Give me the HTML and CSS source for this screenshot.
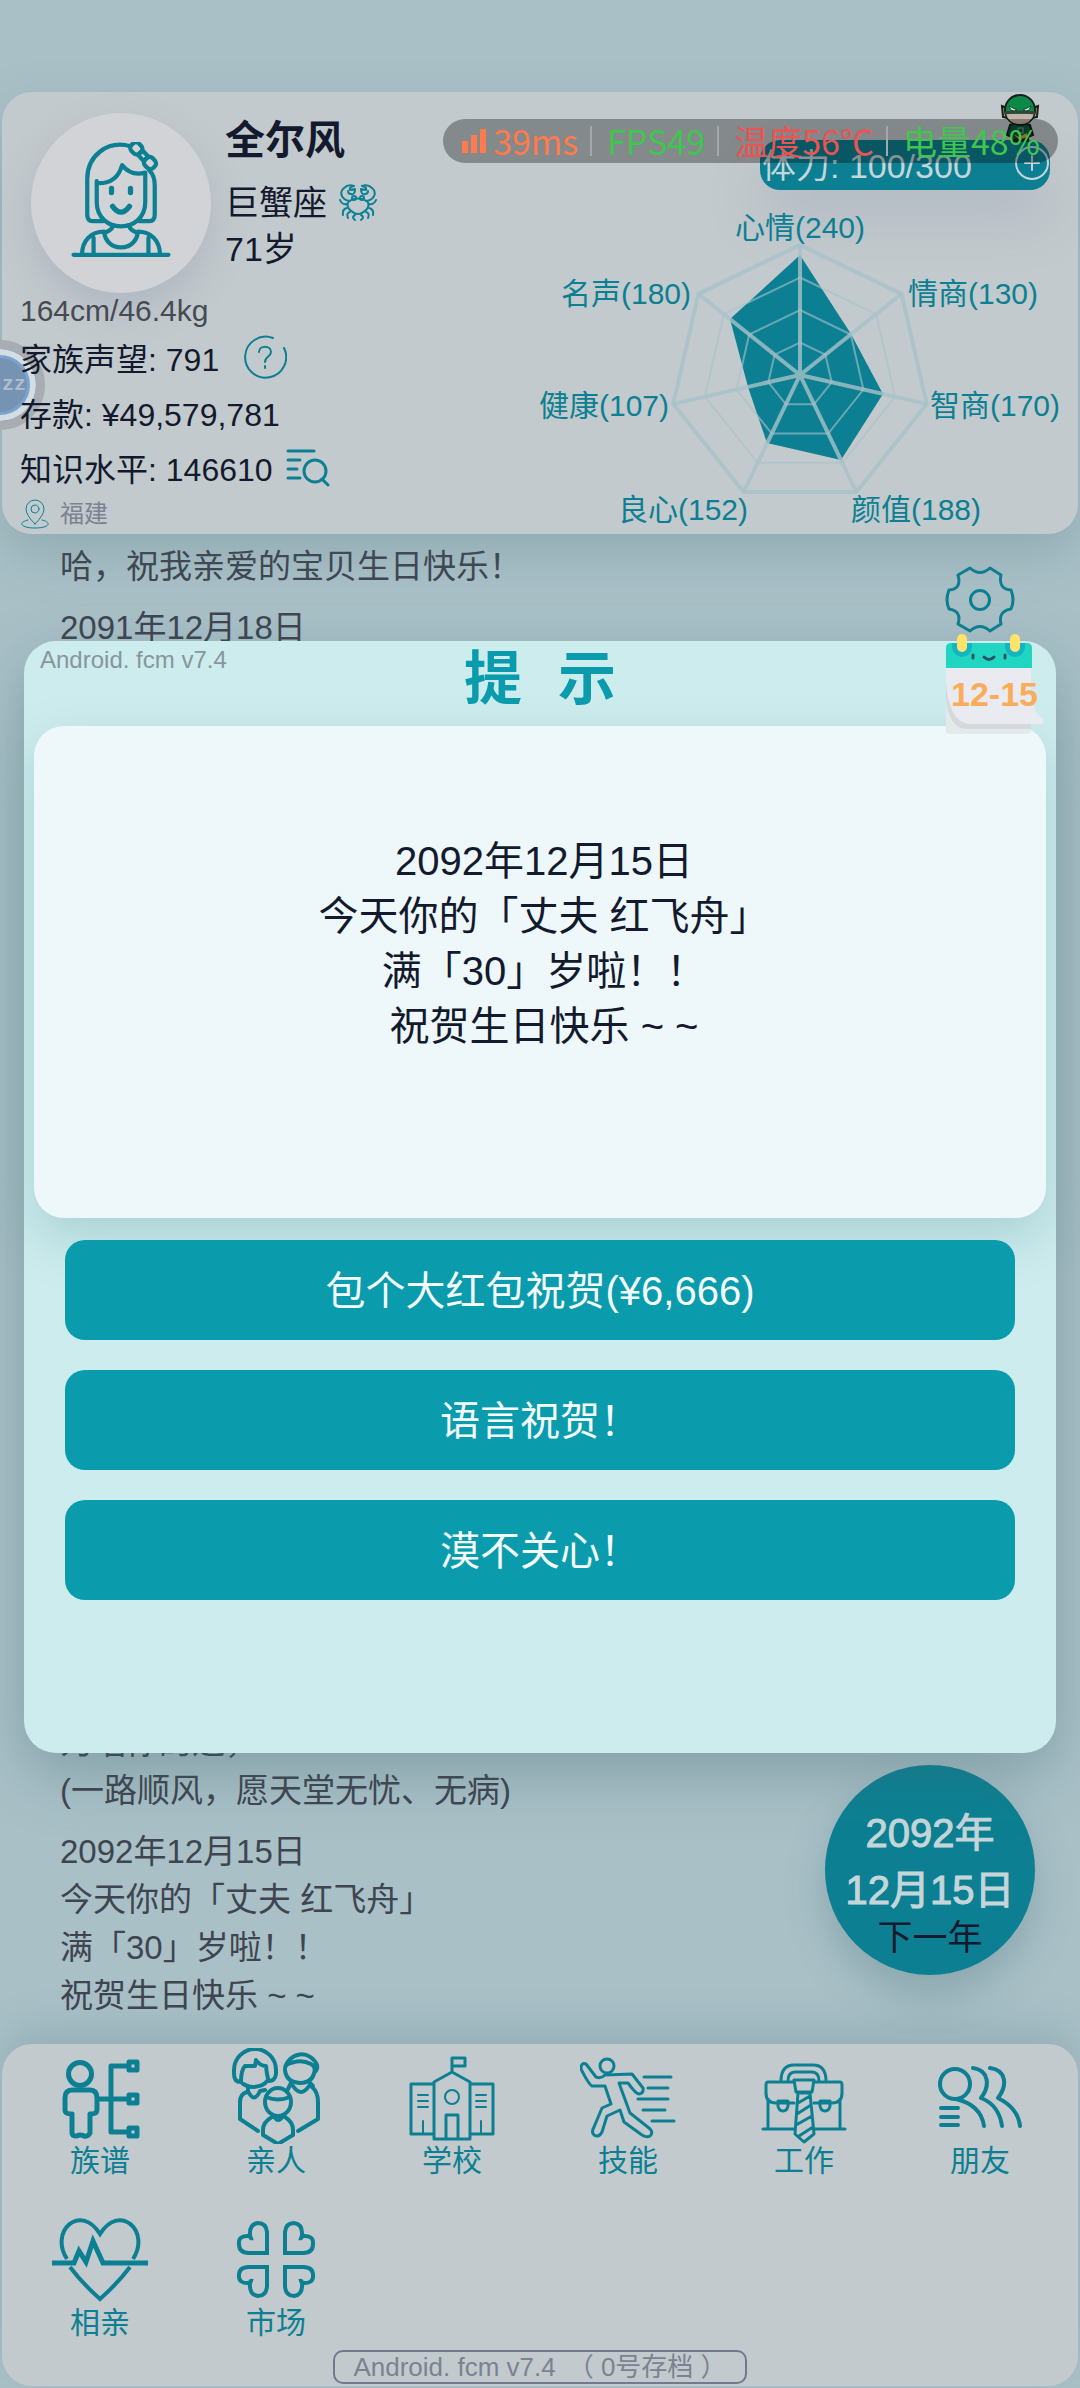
FILE: index.html
```html
<!DOCTYPE html>
<html lang="zh-CN">
<head>
<meta charset="utf-8">
<meta name="viewport" content="width=device-width, initial-scale=1">
<title>人生模拟</title>
<link rel="stylesheet" href="styles.css">
</head>
<body>
<div class="screen">
  <header class="profile">
    <div class="float-ball">zz</div>
    <section class="bio">
      <div class="identity">
        <div class="avatar">
          <svg class="line" width="102" height="116" viewBox="0 1 96 110" stroke-width="4">
            <path d="M57 5C35 -1 16 14 16 36V70Q16 76 21 76H31M75 28Q80 33 80 42V70Q80 76 75 76H65"/>
            <path d="M25 38V58C25 73 36 81 48 81S71 73 71 58V30Q58 34 49 23Q44 41 25 40"/>
            <path d="M39 45V49M57 45V49" stroke-width="5"/>
            <path d="M40 62Q48 73 56 62" stroke-width="5"/>
            <g transform="translate(69 14) rotate(47)"><rect x="-15" y="-5" width="11" height="10" rx="4"/><rect x="-4" y="-3" width="8" height="6"/><rect x="4" y="-5" width="11" height="10" rx="4"/></g>
            <path d="M41 80Q38 86 32 87C33 94 38 101 48 101S63 94 64 87Q58 86 55 80"/>
            <path d="M32 86C20 86 11 94 11 108M64 86C76 86 85 94 85 108M22 92V108M74 92V108M3 108H93"/>
          </svg>
        </div>
        <div class="who">
          <h1 class="name">全尔风</h1>
          <p class="fact">巨蟹座
            <svg class="line" width="40" height="38" viewBox="0 0 40 38" stroke-width="2">
              <path d="M11 17Q20 12 29 17Q32 21 29 25Q24 30 20 30T11 25Q8 21 11 17Z"/>
              <circle cx="16" cy="14" r="2"/><circle cx="24" cy="14" r="2"/>
              <path d="M12 17C3 16 1 8 6 4Q10 0 16 2Q11 3 12 6L17 5Q17 11 13 10Q10 10 10 7M28 17C37 16 39 8 34 4Q30 0 24 2Q29 3 28 6L23 5Q23 11 27 10Q30 10 30 7M9 20Q4 21 2 16M31 20Q36 21 38 16M9 24Q4 25 5 31M31 24Q36 25 35 31M12 28Q8 29 10 34M28 28Q32 29 30 34M17 31Q13 33 17 36M23 31Q27 33 23 36"/>
            </svg>
          </p>
          <p class="fact">71岁</p>
        </div>
      </div>
      <p class="build">164cm/46.4kg</p>
      <p class="stat"><span>家族声望: 791</span>
        <button class="icon-btn help" aria-label="声望说明">
          <svg class="line" width="44" height="44" viewBox="0 0 44 44" stroke-width="2"><path d="M30 3A20.5 20.5 0 1 0 41 13M16 17C16 10 28 10 28 17C28 22 22 21 22 27M22 31V33"/></svg>
        </button>
      </p>
      <p class="stat"><span>存款: ¥49,579,781</span></p>
      <p class="stat"><span>知识水平: 146610</span>
        <button class="icon-btn detail" aria-label="知识明细">
          <svg class="line" width="46" height="40" viewBox="0 0 46 40" stroke-width="3"><path d="M3 4H29M3 13H15M3 22H12M3 31H15M37 32L43 38"/><circle cx="30" cy="24" r="11"/></svg>
        </button>
      </p>
      <p class="place">
        <svg class="line" width="30" height="30" viewBox="0 0 30 30" stroke-width="1"><path d="M15 25Q6 16 6 10A9 9 0 0 1 24 10Q24 16 15 25ZM8 21C-2 23 0 29 15 29S32 23 22 21"/><circle cx="15" cy="10" r="4"/></svg>
        <span>福建</span>
      </p>
    </section>
    <section class="abilities">
      <div class="energy"><span>体力: 100/300</span>
        <button class="icon-btn" aria-label="增加体力">
          <svg class="line pale" width="34" height="34" viewBox="0 0 34 34" stroke-width="2"><circle cx="17" cy="17" r="16"/><path d="M17 10V24M10 17H24"/></svg>
        </button>
      </div>
      <svg class="radar" viewBox="530 200 540 330" role="img" aria-label="能力雷达图">
        <polygon class="area" points="800,255 851,334 883,394 841,460 767,443 748,387 730,319"/>
        <g class="rings">
          <polygon points="800,342.5 825.4,354.7 831.7,382.2 814.1,404.3 785.9,404.3 768.3,382.2 774.6,354.7"/>
          <polygon points="800,310 850.8,334.5 863.4,389.5 828.2,433.6 771.8,433.6 736.6,389.5 749.2,334.5"/>
          <polygon points="800,277.5 876.2,314.2 895.1,396.7 842.3,462.8 757.7,462.8 704.9,396.7 723.8,314.2"/>
        </g>
        <g class="spokes">
          <polygon points="800,245 901.6,293.9 926.7,403.9 856.4,492.1 743.6,492.1 673.3,403.9 698.4,293.9"/>
          <path d="M800 375V245M800 375L901.6 293.9M800 375L926.7 403.9M800 375L856.4 492.1M800 375L743.6 492.1M800 375L673.3 403.9M800 375L698.4 293.9"/>
        </g>
        <g class="axis">
          <text x="800" y="238" text-anchor="middle">心情(240)</text>
          <text x="908" y="304">情商(130)</text>
          <text x="930" y="416">智商(170)</text>
          <text x="851" y="520">颜值(188)</text>
          <text x="748" y="520" text-anchor="end">良心(152)</text>
          <text x="669" y="416" text-anchor="end">健康(107)</text>
          <text x="691" y="304" text-anchor="end">名声(180)</text>
        </g>
      </svg>
    </section>
  </header>

  <main class="story">
    <div class="log">
      <div class="entry"><p>哈，祝我亲爱的宝贝生日快乐！</p></div>
      <div class="entry"><p>2091年12月18日</p></div>
      <div class="entry latest"><p>为唱你的过，</p><p>(一路顺风，愿天堂无忧、无病)</p></div>
      <div class="entry"><p>2092年12月15日</p><p>今天你的「丈夫 红飞舟」</p><p>满「30」岁啦！！</p><p>祝贺生日快乐 ~ ~</p></div>
    </div>
    <div class="side">
      <button class="icon-btn gear" aria-label="设置">
        <svg class="line" width="70" height="68" viewBox="0 0 70 68" stroke-width="3"><path d="M25 2Q35 11 45 2L56 9Q53 23 66 24Q70 34 66 43Q53 45 56 58L45 65Q35 56 25 65L13 58Q17 45 4 43Q0 34 4 24Q17 23 13 9Z"/><circle cx="35" cy="34" r="9.500"/></svg>
      </button>
      <button class="next"><strong>2092年</strong><strong>12月15日</strong><span>下一年</span></button>
    </div>
  </main>

  <nav class="dock">
    <ul class="menu">
      <li><a href="#tree"><svg class="line" width="96" height="96" viewBox="0 0 96 96" stroke-width="5"><circle cx="28" cy="26" r="11.500"/><path d="M20 42H38Q45 42 45 50V62Q45 66 38 66V85Q36 89 32 88Q28 86 25 88Q20 88 20 85V66Q13 66 13 62V50Q13 42 20 42Z"/><path d="M47 51H76M76 18H59V84H76"/><rect x="77" y="14" width="8" height="8"/><rect x="77" y="47" width="8" height="8"/><rect x="77" y="80" width="8" height="8"/></svg>族谱</a></li>
      <li><a href="#family"><svg class="line" width="96" height="96" viewBox="0 0 96 96" stroke-width="4"><path d="M13 34Q6 34 6 26V22A21 21 0 0 1 48 22V26Q47 33 41 33Q39 29 38 18Q32 18 28 12L27 18H17Q13 22 13 34Q18 39 26 39Q36 38 39 33"/><path d="M20 39V43Q26 56 32 43L37 42M19 44Q12 46 12 54V71L30 83"/><path d="M57 20A17 18 0 0 1 89 17Q90 21 87 24Q87 18 83 16Q72 10 58 17ZM57 22Q58 34 72 35Q86 35 87 20M63 35L60 41M82 35L85 38M65 38Q73 50 81 38M84 39Q90 44 90 54V71L70 83"/><ellipse cx="50" cy="54" rx="13" ry="14"/><path d="M38 49Q50 54 62 49M46 68Q50 76 55 68M44 69Q35 74 35 82V87L50 96L65 87V82Q65 74 57 69"/></svg>亲人</a></li>
      <li><a href="#school"><svg class="line" width="96" height="96" viewBox="0 0 96 96" stroke-width="3"><path d="M30 86H7V36H30M66 36H89V86H66M30 91V34L48 24L66 34V91ZM48 24V10H61V18H48M42 90V67H54V90"/><circle cx="48" cy="49" r="7" stroke-width="2"/><path stroke-width="2" d="M14 47H24M14 53H24M14 59H24M72 47H82M72 53H82M72 59H82M19 73V85M77 73V85"/></svg>学校</a></li>
      <li><a href="#skill"><svg class="line" width="96" height="96" viewBox="0 0 96 96" stroke-width="3"><circle cx="27" cy="18" r="7"/><path d="M25 27L52 26L63 40Q64 45 59 46Q56 46 48 35H39L50 65L69 80Q74 84 70 88Q67 90 62 87L44 74L40 62L27 68L22 84Q19 90 14 87Q11 84 14 79L22 60L31 56L25 38H12Q9 37 1 21Q1 14 6 16L16 29Q21 31 25 27M64 29H91M68 40H88M58 51H88M63 62H85M72 73H94"/></svg>技能</a></li>
      <li><a href="#job"><svg class="line" width="96" height="96" viewBox="0 0 96 96" stroke-width="3"><path d="M25 33Q25 17 38 17H57Q70 17 70 33M32 33Q32 24 39 24H56Q63 24 63 33M38 34H12Q10 34 10 37V45Q10 55 20 55H38M58 34H84Q86 34 86 37V45Q86 55 76 55H58M12 51V81M84 51V81M7 81H38M58 81H89"/><path d="M22 53H32V58Q31 63 27 63T22 58ZM64 53H74V58Q73 63 69 63T64 58ZM38 32H58L56 44H40ZM42 45H54L58 86L48 94L39 86ZM54 48L42 55M55 57L41 66M56 68L40 77M57 79L43 88"/></svg>工作</a></li>
      <li><a href="#friend"><svg class="line" width="96" height="96" viewBox="0 0 96 96" stroke-width="4"><circle cx="23" cy="36" r="15"/><path d="M24 51Q49 57 52 78M41 20C56 22 59 37 49 50Q67 57 70 78M58 20C74 22 76 37 66 50Q86 60 88 78M9 60H26M9 69H26M9 77H26"/></svg>朋友</a></li>
      <li><a href="#date"><svg class="line butt" width="96" height="96" viewBox="0 0 96 96" stroke-width="4"><path d="M15 49C-3 22 28 -8 48 24C68 -8 99 22 81 49M18 57Q30 73 48 89Q66 73 78 57"/><path d="M0 53H22L27 41L34 52L41 31L51 53H96" stroke-width="5"/></svg>相亲</a></li>
      <li><a href="#market"><svg class="line butt" width="96" height="96" viewBox="0 0 96 96" stroke-width="4"><path d="M39 43V22Q38 13 30 13Q21 14 22 26Q10 25 11 34Q11 43 21 43ZM22 26Q22 29 25 28"/><path d="M57 43V22Q58 13 66 13Q75 14 74 26Q86 25 85 34Q85 43 75 43ZM74 26Q74 29 71 28M39 57V77Q38 86 30 86Q21 85 22 73Q10 74 11 65Q11 57 21 57ZM22 73Q22 70 25 71M57 57V77Q58 86 66 86Q75 85 74 73Q86 74 85 65Q85 57 75 57ZM74 73Q74 70 71 71"/></svg>市场</a></li>
    </ul>
    <button class="save"><span>Android. fcm v7.4</span><span>（ 0号存档 ）</span></button>
  </nav>

  <div class="hero">
    <svg width="40" height="50" viewBox="0 0 40 50">
      <path d="M10 32Q20 28 30 32L33 42L28 44V48H12V44L7 42Z" fill="#08573a" stroke="#14201c" stroke-width="2"/>
      <path d="M13 41L19 44L27 40V44L20 47Z" fill="#d6a52d"/><path d="M14 47H18M22 47H26" stroke="#211b1b" stroke-width="3"/>
      <rect x="18" y="35" width="5" height="5" fill="none" stroke="#79a594"/>
      <path d="M2 13L7 15V25L3 24ZM38 13L33 15V25L37 24Z" fill="#c7a755" stroke="#14201c" stroke-width="2"/>
      <ellipse cx="20" cy="17" rx="15" ry="15" fill="#0a8949" stroke="#14201c" stroke-width="2"/>
      <path d="M6 21H34Q31 31 20 31T6 21Z" fill="#c5b4a8"/><path d="M5 20Q20 18 35 20" fill="none" stroke="#34443b" stroke-width="3"/>
      <path d="M9 13L17 17Q11 20 9 13ZM31 13L23 17Q29 20 31 13Z" fill="#e3e8e3" stroke="#0a4c2e"/>
    </svg>
  </div>

  <aside class="monitor">
    <span class="net"><svg width="26" height="26" viewBox="0 0 26 26"><path d="M1 13H7V25H1ZM10 7H16V25H10ZM19 1H25V25H19Z"/></svg>39ms</span>
    <span class="good">FPS49</span>
    <span class="hot">温度56℃</span>
    <span class="good">电量48%</span>
  </aside>

  <section class="dialog" role="dialog" aria-labelledby="dialog-title">
    <header class="dialog-head">
      <span class="version">Android. fcm v7.4</span>
      <h2 id="dialog-title" class="title"><span>提</span><span>示</span></h2>
    </header>
    <div class="message">
      <p>2092年12月15日</p>
      <p>今天你的「丈夫 红飞舟」</p>
      <p>满「30」岁啦！！</p>
      <p>祝贺生日快乐 ~ ~</p>
    </div>
    <div class="choices">
      <button class="choice">包个大红包祝贺(¥6,666)</button>
      <button class="choice">语言祝贺！</button>
      <button class="choice">漠不关心！</button>
    </div>
    <div class="calendar">
      <svg width="100" height="100" viewBox="0 0 100 100">
        <path d="M1 50H86V96Q86 100 82 100H4Q1 100 1 96Z" fill="#e4e9ea"/>
        <path d="M1 62Q3 95 22 95H86V50H1Z" fill="#d5d9dc"/>
        <path d="M1 34H86V66Q90 80 98 85Q100 90 94 90H24Q4 88 1 48Z" fill="#e9ebf1"/>
        <path d="M1 34V14Q1 9 6 9H82Q87 9 87 14V34Z" fill="#21d6c1"/>
        <path d="M7 9H27V13A10 10 0 0 1 7 13ZM60 9H80V13A10 10 0 0 1 60 13Z" fill="#13b5c4"/>
        <path d="M17 5V13M70 5V13" stroke="#ffe36a" stroke-width="10" stroke-linecap="round"/>
        <path d="M28 21V24M60 21V24M39 23Q44 28 49 23" stroke="#25565f" stroke-width="3" fill="none" stroke-linecap="round"/>
      </svg>
      <time class="day">12-15</time>
    </div>
  </section>
</div>
</body>
</html>
```
FILE: styles.css
```css
* { box-sizing: border-box; margin: 0; padding: 0; }

:root {
  --teal: #0c8092;
  --ink: #131a2e;
  --panel: #c3cacd;
  --muted: #7c8290;
}

body {
  font-family: "Liberation Sans", "Noto Sans CJK SC", sans-serif;
  background: #a9c0c7;
  color: var(--ink);
}

button { font: inherit; color: inherit; border: 0; background: none; cursor: pointer; }
a { color: inherit; text-decoration: none; }
ul { list-style: none; }

.screen {
  position: relative;
  display: flex;
  flex-direction: column;
  min-height: 100vh;
  padding: 92px 2px 2px;
  overflow: hidden;
}

.line {
  display: block;
  fill: none;
  stroke: var(--teal);
  stroke-linecap: round;
  stroke-linejoin: round;
}
.line.pale { stroke: #c4d6da; }
.line.butt { stroke-linecap: butt; stroke-linejoin: miter; }
.icon-btn { display: block; }

/* profile card */
.profile {
  position: relative;
  isolation: isolate;
  display: flex;
  justify-content: space-between;
  padding-left: 18px;
  border-radius: 30px;
  background: var(--panel);
  box-shadow: 0 20px 50px rgba(70, 110, 115, 0.25);
}
.bio { padding-top: 21px; }
.identity { display: flex; gap: 14px; padding-left: 11px; }
.avatar {
  display: grid;
  place-items: center;
  width: 180px;
  height: 180px;
  padding-bottom: 6px;
  border-radius: 50%;
  background: #d2d3d7;
  box-shadow: 0 16px 36px rgba(130, 140, 170, 0.3);
}
.name { font-size: 40px; line-height: 54px; margin-bottom: 13px; }
.fact { display: flex; align-items: center; gap: 11px; font-size: 34px; line-height: 46px; }
.build { font-size: 30px; line-height: 36px; color: #464a53; }
.stat { display: flex; align-items: center; height: 55px; font-size: 32px; }
.help { margin-left: 24px; }
.detail { margin-left: 12px; }
.place { display: flex; align-items: center; gap: 10px; font-size: 24px; line-height: 40px; color: var(--muted); }

.abilities { display: flex; flex-direction: column; align-items: flex-end; padding: 48px 8px 0 0; }
.energy {
  display: flex;
  align-items: center;
  justify-content: space-between;
  width: 290px;
  height: 50px;
  margin: 0 20px 10px 0;
  padding: 0 1px 4px 2px;
  border-radius: 20px;
  background: var(--teal);
  color: #c4d6da;
  font-size: 34px;
  box-shadow: 0 30px 50px rgba(130, 140, 170, 0.25);
}
.radar { width: 540px; max-width: 100%; }
.radar .area { fill: var(--teal); }
.radar .rings { fill: none; stroke: #a8c1c9; stroke-width: 2; stroke-opacity: 0.6; }
.radar .spokes { fill: none; stroke: #a8c1c9; stroke-width: 4; stroke-opacity: 0.8; }
.radar .axis { fill: var(--teal); font-size: 30px; }

/* half-hidden helper ball on the screen edge */
.float-ball {
  position: absolute;
  z-index: -1;
  left: -47px;
  top: 248px;
  width: 90px;
  height: 90px;
  padding-right: 10px;
  border: 9px solid #a7adb0;
  border-radius: 50%;
  background: #7793b3;
  box-shadow: inset 0 0 0 6px #d3dde4, inset 0 0 0 9px #7ba3d0;
  color: #aebdcb;
  font: bold 20px/72px "Liberation Mono", monospace;
  text-align: right;
}

/* story log */
.story { flex: 1; display: flex; justify-content: space-between; }
.log {
  display: flex;
  flex-direction: column;
  gap: 13px;
  padding: 9px 0 24px 58px;
  color: #3f4550;
  font-size: 33px;
  line-height: 48px;
}
.latest { margin-top: auto; }
.side {
  display: flex;
  flex-direction: column;
  justify-content: space-between;
  align-items: flex-end;
  padding: 32px 43px 69px 0;
}
.gear { margin-right: 20px; }
.next {
  display: flex;
  flex-direction: column;
  align-items: center;
  width: 210px;
  height: 210px;
  padding-top: 40px;
  border-radius: 50%;
  background: var(--teal);
  box-shadow: 0 20px 40px rgba(70, 110, 115, 0.3);
}
.next strong { font-size: 40px; font-weight: 400; line-height: 57px; color: #c4d6da; -webkit-text-stroke: 1px currentColor; }
.next span { font-size: 35px; line-height: 38px; }

/* bottom navigation */
.dock {
  display: flex;
  flex-direction: column;
  align-items: center;
  padding: 4px 10px 2px;
  border-radius: 30px;
  background: var(--panel);
  box-shadow: 0 -16px 40px rgba(70, 110, 115, 0.2);
}
.menu { display: grid; grid-template-columns: repeat(6, 1fr); width: 100%; }
.menu a {
  display: flex;
  flex-direction: column;
  align-items: center;
  height: 162px;
  color: var(--teal);
  font-size: 30px;
  line-height: 34px;
}
.menu li:nth-child(n + 7) a { height: 140px; }
.save {
  display: flex;
  gap: 12px;
  height: 34px;
  padding: 0 18px;
  border: 2px solid #74798b;
  border-radius: 10px;
  color: var(--muted);
  font-size: 26px;
  line-height: 30px;
}

/* device monitor strip */
.hero { position: absolute; top: 93px; right: 40px; }
.monitor {
  position: absolute;
  top: 119px;
  right: 22px;
  display: flex;
  align-items: center;
  height: 44px;
  padding: 0 18px 0 18px;
  border-radius: 22px;
  background: rgba(0, 0, 0, 0.32);
  font: 34px/44px "Noto Sans CJK SC", sans-serif;
}
.monitor span + span { margin-left: 12px; padding-left: 17px; background: linear-gradient(#a4a8aa, #a4a8aa) left center / 2px 30px no-repeat; }
.net { display: flex; align-items: center; gap: 6px; color: #ff7a4d; }
.net svg { fill: currentColor; }
.good { color: #3fc550; }
.hot { color: #ea5452; }

/* event dialog */
.dialog {
  position: absolute;
  top: 641px;
  left: 24px;
  right: 24px;
  min-height: 1112px;
  padding: 0 10px 153px;
  border-radius: 32px;
  background: #cdecee;
  box-shadow: 0 20px 60px rgba(60, 100, 105, 0.35);
}
.dialog-head { display: grid; grid-template-columns: 1fr auto 1fr; height: 85px; padding-left: 6px; }
.version { font-size: 24px; line-height: 38px; color: #87959d; }
.title { display: flex; gap: 36px; margin-right: 6px; font-size: 58px; line-height: 76px; color: #0a9bad; }
.message {
  padding: 108px 16px 108px 24px;
  min-height: 492px;
  border-radius: 30px;
  background: #eef7f9;
  box-shadow: 0 20px 50px rgba(70, 130, 130, 0.25);
  font-size: 40px;
  line-height: 55px;
  text-align: center;
}
.choices { display: flex; flex-direction: column; gap: 30px; padding: 22px 31px 0; }
.choice { height: 100px; padding-bottom: 4px; border-radius: 20px; background: #0a9bad; color: #f4fcfd; font-size: 40px; }
.calendar { position: absolute; top: -7px; right: 11px; width: 100px; }
.calendar svg { display: block; }
.day {
  position: absolute;
  left: 6px;
  top: 40px;
  font-size: 34px;
  font-weight: 700;
  line-height: 40px;
  color: #f9ad5c;
}
```
